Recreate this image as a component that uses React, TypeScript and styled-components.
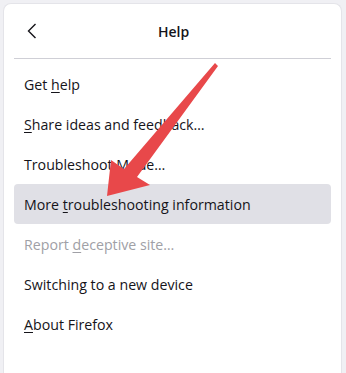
import React from "react";
import styled, { createGlobalStyle } from "styled-components";

const Global = createGlobalStyle`
  html, body { margin: 0; padding: 0; }
  body { background: #f0f0f4; }
`;

const Page = styled.div`
  position: relative;
  width: 346px;
  height: 373px;
  box-sizing: border-box;
  padding: 3px 4px 0 3px;
  background: #f0f0f4;
  overflow: hidden;
  font-family: "Open Sans", "Noto Sans", sans-serif;
  color: #15141a;
`;

const Panel = styled.div`
  height: 100%;
  box-sizing: border-box;
  background: #ffffff;
  border: 1px solid #e4e4e9;
  border-bottom: none;
  border-radius: 8px 8px 0 0;
  display: flex;
  flex-direction: column;
`;

const Header = styled.div`
  height: 54px;
  display: grid;
  grid-template-columns: 40px 1fr 40px;
  align-items: center;
  padding: 0 10px 0 12px;
`;

const BackButton = styled.button`
  width: 32px;
  height: 32px;
  border: none;
  background: transparent;
  padding: 0;
  display: flex;
  align-items: center;
  justify-content: center;
  color: #15141a;
`;

const Title = styled.h1`
  margin: 0;
  text-align: center;
  font-size: 14px;
  font-weight: 600;
`;

const Separator = styled.hr`
  margin: 0 10px;
  border: none;
  border-top: 1px solid #cfcfd6;
`;

const Menu = styled.ul`
  list-style: none;
  margin: 0;
  padding: 5px 10px 0;
`;

const Item = styled.li<{ $active?: boolean; $disabled?: boolean }>`
  height: 40px;
  display: flex;
  align-items: center;
  padding: 0 10px;
  border-radius: 4px;
  font-size: 14.2px;
  white-space: pre;
  background: ${(p) => (p.$active ? "#e0e0e6" : "transparent")};
  color: ${(p) => (p.$disabled ? "#a0a0a6" : "#15141a")};
`;

const Key = styled.span`
  text-decoration: underline;
  text-underline-offset: 2px;
`;

const Arrow = styled.svg`
  position: absolute;
  left: 0;
  top: 0;
  pointer-events: none;
`;

export default function App() {
  return (
    <Page>
      <Global />
      <Panel>
        <Header>
          <BackButton aria-label="Back">
            <svg width="16" height="18" viewBox="0 0 16 18">
              <path d="M11.5 2 L4.5 9 L11.5 16" fill="none" stroke="#15141a" strokeWidth="1.4" />
            </svg>
          </BackButton>
          <Title>Help</Title>
          <span />
        </Header>
        <Separator />
        <Menu>
          <Item>{"Get "}<Key>h</Key>{"elp"}</Item>
          <Item><Key>S</Key>{"hare ideas and feedback…"}</Item>
          <Item>{"Troubleshoot "}<Key>M</Key>{"ode…"}</Item>
          <Item $active>{"More "}<Key>t</Key>{"roubleshooting information"}</Item>
          <Item $disabled>{"Report "}<Key>d</Key>{"eceptive site…"}</Item>
          <Item>Switching to a new device</Item>
          <Item><Key>A</Key>{"bout Firefox"}</Item>
        </Menu>
      </Panel>
      <Arrow width="346" height="373" viewBox="0 0 346 373">
        <polygon
          points="215,63 218,66 137,177 150,185 107,196 111,160 124,169"
          fill="#e8484a"
        />
      </Arrow>
    </Page>
  );
}
